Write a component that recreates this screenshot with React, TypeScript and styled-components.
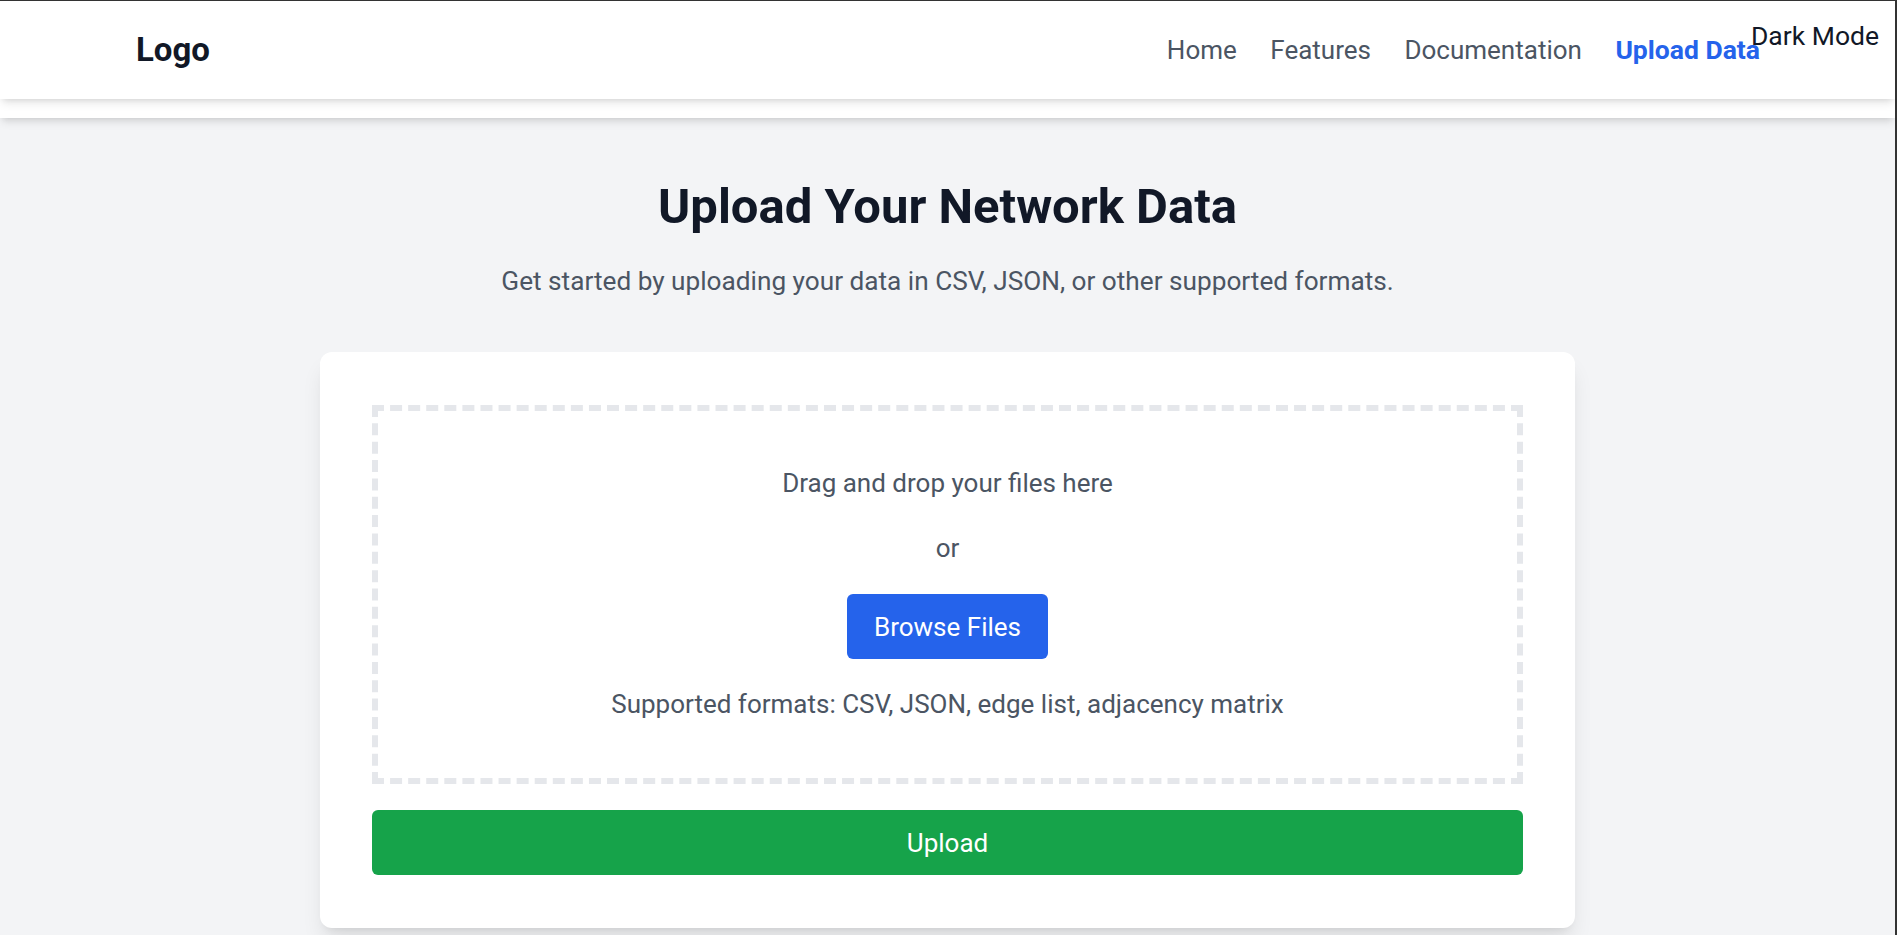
import React from "react";
import styled, { createGlobalStyle } from "styled-components";

const GlobalStyle = createGlobalStyle`
  html, body { margin: 0; padding: 0; }
  body {
    font-family: Roboto, "Liberation Sans", Arial, sans-serif;
    background: #f3f4f6;
    -webkit-font-smoothing: antialiased;
  }
  * { box-sizing: border-box; }
`;

const Frame = styled.div`
  position: relative;
  min-height: 100vh;
  background: #f3f4f6;
  border-top: 1px solid #333333;
  border-right: 2px solid #333333;
  overflow: hidden;
`;

const Header = styled.header`
  position: relative;
  z-index: 2;
  height: 98px;
  background: #ffffff;
  box-shadow: 0 6px 9px -2px rgba(0, 0, 0, 0.1), 0 3px 6px -3px rgba(0, 0, 0, 0.1);
  display: flex;
  align-items: center;
  justify-content: space-between;
  padding: 0 135px 0 136px;
`;

const Logo = styled.div`
  font-size: 33px;
  line-height: 48px;
  font-weight: 700;
  color: #111827;
`;

const Nav = styled.nav`
  display: flex;
  align-items: center;
  gap: 33.5px;
`;

const NavLink = styled.a<{ $active?: boolean }>`
  font-size: ${(p) => (p.$active ? 26.5 : 26)}px;
  line-height: 42px;
  font-weight: ${(p) => (p.$active ? 700 : 400)};
  color: ${(p) => (p.$active ? "#2563eb" : "#4b5563")};
  text-decoration: none;
  cursor: pointer;
`;

const ThemeToggle = styled.button`
  position: absolute;
  top: 14px;
  right: 16px;
  z-index: 3;
  background: none;
  border: none;
  padding: 0;
  font-family: inherit;
  font-size: 26.5px;
  line-height: 42px;
  color: #111827;
  cursor: pointer;
`;

const SubBar = styled.div`
  position: relative;
  z-index: 1;
  height: 19px;
  background: #ffffff;
  box-shadow: 0 6px 9px -2px rgba(0, 0, 0, 0.1), 0 3px 6px -3px rgba(0, 0, 0, 0.1);
`;

const Main = styled.main`
  display: flex;
  flex-direction: column;
  align-items: center;
  padding-top: 62px;
`;

const Title = styled.h1`
  margin: 0 0 26px;
  font-size: 49px;
  line-height: 54px;
  font-weight: 700;
  color: #111827;
  text-align: center;
`;

const Subtitle = styled.p`
  margin: 0 0 50px;
  font-size: 26.2px;
  line-height: 42px;
  color: #4b5563;
  text-align: center;
`;

const Card = styled.section`
  width: 1255px;
  background: #ffffff;
  border-radius: 12px;
  box-shadow: 0 15px 22px -4px rgba(0, 0, 0, 0.1), 0 6px 9px -6px rgba(0, 0, 0, 0.1);
  padding: 53px 52px 53px;
  display: flex;
  flex-direction: column;
  gap: 26px;
`;

const DropZone = styled.div`
  border: 6px dashed #e5e7eb;
  padding: 54px 24px 56px;
  display: flex;
  flex-direction: column;
  align-items: center;
  text-align: center;
`;

const ZoneText = styled.p<{ $gap: number }>`
  margin: 0 0 ${(p) => p.$gap}px;
  font-size: 26px;
  line-height: 36px;
  color: #4b5563;
`;

const PrimaryButton = styled.button`
  height: 65px;
  padding: 0 27px;
  margin-bottom: 27px;
  border: none;
  border-radius: 6px;
  background: #2563eb;
  color: #ffffff;
  font-family: inherit;
  font-size: 26px;
  cursor: pointer;
`;

const UploadButton = styled.button`
  width: 100%;
  height: 65px;
  border: none;
  border-radius: 6px;
  background: #16a34a;
  color: #ffffff;
  font-family: inherit;
  font-size: 26px;
  cursor: pointer;
`;

export default function App() {
  return (
    <>
      <GlobalStyle />
      <Frame>
        <Header>
          <Logo>Logo</Logo>
          <Nav>
            <NavLink>Home</NavLink>
            <NavLink>Features</NavLink>
            <NavLink>Documentation</NavLink>
            <NavLink $active>Upload Data</NavLink>
          </Nav>
        </Header>
        <ThemeToggle>Dark Mode</ThemeToggle>
        <SubBar />
        <Main>
          <Title>Upload Your Network Data</Title>
          <Subtitle>
            Get started by uploading your data in CSV, JSON, or other supported formats.
          </Subtitle>
          <Card>
            <DropZone>
              <ZoneText $gap={29}>Drag and drop your files here</ZoneText>
              <ZoneText $gap={28}>or</ZoneText>
              <PrimaryButton>Browse Files</PrimaryButton>
              <ZoneText $gap={0}>
                Supported formats: CSV, JSON, edge list, adjacency matrix
              </ZoneText>
            </DropZone>
            <UploadButton>Upload</UploadButton>
          </Card>
        </Main>
      </Frame>
    </>
  );
}
